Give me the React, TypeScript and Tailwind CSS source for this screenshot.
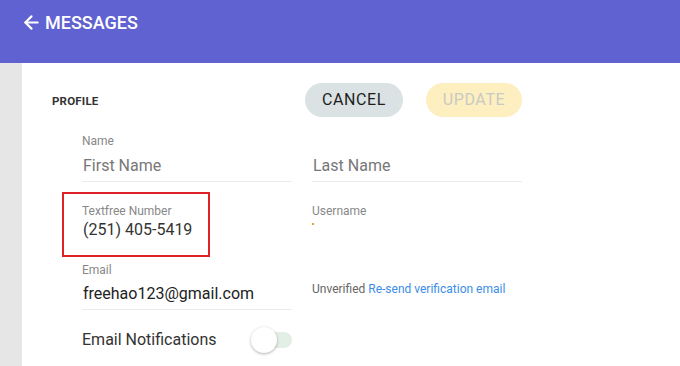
import { ArrowLeft } from "lucide-react";

export default function App() {
  return (
    <div className="w-[680px] h-[366px] overflow-hidden bg-white font-['Roboto',sans-serif]">
      <header className="h-[63px] bg-[#5f62d0] flex items-start pl-[21px] pt-[12px]">
        <ArrowLeft className="w-[21px] h-[21px] text-white" strokeWidth={2.5} />
        <span className="ml-[3px] text-white text-[18px] font-medium leading-[21px]">MESSAGES</span>
      </header>
      <div className="flex h-[303px]">
        <div className="w-[22px] bg-[#e6e6e6]" />
        <div className="flex-1 pl-[30px] pt-[20px]">
          <div className="flex items-center h-[34px]">
            <span className="w-[253px] pt-[3px] text-[11.5px] font-bold text-[#333] tracking-[0.2px]">PROFILE</span>
            <button className="w-[98px] h-[34px] rounded-full bg-[#dae2e4] text-[16px] text-[#1e1e1e] tracking-[0.6px]">
              CANCEL
            </button>
            <button className="ml-[23px] w-[96px] h-[34px] rounded-full bg-[#fdefc0] text-[16px] text-[#c9c9c4] tracking-[0.6px]">
              UPDATE
            </button>
          </div>
          <div className="pl-[30px] pt-[17px] grid grid-cols-[210px_210px] gap-x-[20px]">
            <div>
              <div className="text-[12px] text-[#888] leading-[14px]">Name</div>
              <div className="mt-[6px] text-[16px] text-[#777] leading-[24px] pl-[1px] pb-[3px] border-b border-[#e6eee7]">First Name</div>
            </div>
            <div>
              <div className="h-[14px]" />
              <div className="mt-[6px] text-[16px] text-[#777] leading-[24px] pl-[1px] pb-[3px] border-b border-[#e6eee7]">Last Name</div>
            </div>

            <div className="relative mt-[22px]">
              <div className="absolute left-[-20px] top-[-12px] w-[148px] h-[65px] border-2 border-[#e0202a]" />
              <div className="text-[12px] text-[#888] leading-[14px]">Textfree Number</div>
              <div className="mt-[0px] text-[16px] text-[#333] leading-[24px] pl-[1px]">(251) 405-5419</div>
            </div>
            <div className="mt-[22px]">
              <div className="text-[12px] text-[#888] leading-[14px]">Username</div>
              <div className="mt-[5px] w-[2px] h-[2px] bg-[#f0a030]" />
            </div>

            <div className="mt-[21px]">
              <div className="text-[12px] text-[#888] leading-[14px]">Email</div>
              <div className="mt-[5px] text-[16px] text-[#222] leading-[24px] pl-[1px] pb-[3px] border-b border-[#e6eee7]">freehao123@gmail.com</div>
            </div>
            <div className="mt-[21px] pt-[13px]">
              <span className="text-[12px] text-[#666]">Unverified </span>
              <span className="text-[12px] text-[#3b8de8]">Re-send verification email</span>
            </div>

            <div className="mt-[16px] flex items-center h-[28px]">
              <span className="text-[16px] text-[#333]">Email Notifications</span>
              <div className="relative ml-auto w-[41px] h-[26px]">
                <div className="absolute right-0 top-[5px] w-[32px] h-[16px] rounded-full bg-[#e3efe6]" />
                <div className="absolute left-0 top-0 w-[26px] h-[26px] rounded-full bg-white shadow-[0_1px_3px_rgba(0,0,0,0.3)]" />
              </div>
            </div>
          </div>
        </div>
      </div>
    </div>
  );
}
